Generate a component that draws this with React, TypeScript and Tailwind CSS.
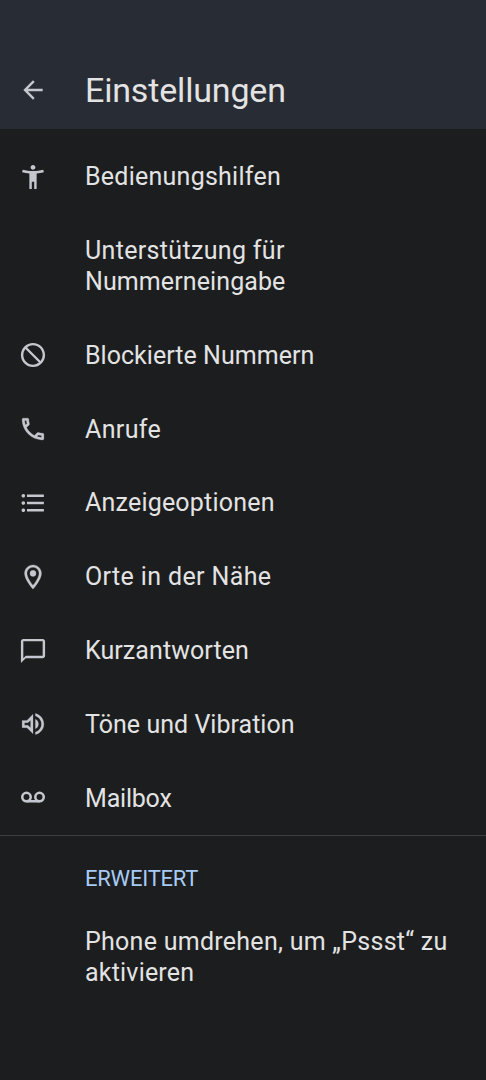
import type { ReactNode } from 'react';
import { MdAccessibilityNew, MdArrowBack, MdBlock, MdFormatListBulleted, MdChatBubbleOutline } from 'react-icons/md';

const ICON = 'size-[30px] p-[0.5px] text-[#c4c7ce]';

function CallIcon() {
  return (
    <svg viewBox="0 0 24 24" className={ICON} fill="currentColor" stroke="currentColor" strokeWidth="0.25">
      <path d="M6.54 5c.06.89.21 1.76.45 2.59l-1.2 1.2c-.41-1.2-.67-2.47-.76-3.79h1.51m9.86 12.02c.85.24 1.72.39 2.6.45v1.49c-1.32-.09-2.59-.35-3.8-.75l1.2-1.19M7.5 3H4c-.55 0-1 .45-1 1 0 9.39 7.61 17 17 17 .55 0 1-.45 1-1v-3.49c0-.55-.45-1-1-1-1.24 0-2.45-.2-3.57-.57-.1-.04-.21-.05-.31-.05-.26 0-.51.1-.71.29l-2.2 2.2c-2.83-1.45-5.15-3.76-6.59-6.59l2.2-2.2c.28-.28.36-.67.25-1.02C8.7 6.45 8.5 5.25 8.5 4c0-.55-.45-1-1-1z" />
    </svg>
  );
}

function PlaceIcon() {
  return (
    <svg viewBox="0 0 24 24" className={ICON} fill="currentColor" stroke="currentColor" strokeWidth="0.25">
      <path fillRule="evenodd" d="M12 2C8.13 2 5 5.13 5 9c0 5.25 7 13 7 13s7-7.75 7-13c0-3.87-3.13-7-7-7zM7 9c0-2.76 2.24-5 5-5s5 2.24 5 5c0 2.88-2.88 7.19-5 9.88C9.92 16.21 7 11.85 7 9z" />
      <circle cx="12" cy="9" r="2.5" />
    </svg>
  );
}

function VolumeIcon() {
  return (
    <svg viewBox="0 0 24 24" className={ICON} fill="currentColor" stroke="currentColor" strokeWidth="0.2">
      <path d="M3 9v6h4l5 5V4L7 9H3zm7-.17v6.34L7.83 13H5v-2h2.83L10 8.83zM16.5 12A4.5 4.5 0 0 0 14 7.97v8.05A4.47 4.47 0 0 0 16.5 12zM14 3.23v2.06c2.89.86 5 3.54 5 6.71s-2.11 5.85-5 6.71v2.06c4.01-.91 7-4.49 7-8.77s-2.99-7.86-7-8.77z" />
    </svg>
  );
}

function VoicemailIcon() {
  return (
    <svg viewBox="0 0 24 24" className={ICON} fill="none" stroke="currentColor" strokeWidth="2.1">
      <circle cx="6.6" cy="11.2" r="3.5" />
      <circle cx="17.4" cy="11.2" r="3.5" />
      <path d="M6.6 14.7h10.8" />
    </svg>
  );
}

type RowData = { label: string; tracking: string; icon: ReactNode };

const rows: RowData[] = [
  { label: 'Blockierte Nummern', tracking: 'tracking-[0.03px]', icon: <MdBlock className="size-[30px] -scale-x-100 p-[0.5px] text-[#c4c7ce]" /> },
  { label: 'Anrufe', tracking: 'tracking-[0.35px]', icon: <CallIcon /> },
  { label: 'Anzeigeoptionen', tracking: 'tracking-[0.2px]', icon: <MdFormatListBulleted className={ICON} /> },
  { label: 'Orte in der Nähe', tracking: 'tracking-[0.37px]', icon: <PlaceIcon /> },
  { label: 'Kurzantworten', tracking: 'tracking-[0.07px]', icon: <MdChatBubbleOutline className={ICON} /> },
  { label: 'Töne und Vibration', tracking: 'tracking-[0.03px]', icon: <VolumeIcon /> },
  { label: 'Mailbox', tracking: 'tracking-[-0.2px]', icon: <VoicemailIcon /> },
];

function Row({ label, tracking, icon }: RowData) {
  return (
    <li className="flex h-[73.8px] items-center">
      <span className="flex w-[85px] shrink-0 pl-[18px]">{icon}</span>
      <span className={tracking}>{label}</span>
    </li>
  );
}

export default function App() {
  return (
    <main className="flex h-[1080px] w-[486px] flex-col bg-[#1c1d1f] font-['Roboto',sans-serif] text-[25px] leading-[31px] text-[#e3e3e3]">
      <header className="flex h-[129px] shrink-0 items-end bg-[#282c34] pb-[14.6px]">
        <span className="flex h-12 w-[85px] shrink-0 items-center pl-[18px]"><MdArrowBack className={ICON} /></span>
        <h1 className="text-[34px] leading-[48px] tracking-[-0.17px]">Einstellungen</h1>
      </header>
      <ul className="pt-[10.7px]">
        <Row label="Bedienungshilfen" tracking="tracking-[0.25px]" icon={<MdAccessibilityNew className={ICON} />} />
        <li className="flex h-[105px] flex-col justify-center pl-[85px]">
          <span className="tracking-[0.33px]">Unterstützung für</span>
          <span className="tracking-[0.1px]">Nummerneingabe</span>
        </li>
        {rows.map((r) => <Row key={r.label} {...r} />)}
      </ul>
      <section className="border-t border-[#3c3e40] pl-[85px] pt-[26.8px]">
        <h2 className="text-[22px] leading-[31px] tracking-[-0.22px] text-[#a8cbf5]">ERWEITERT</h2>
        <p className="flex flex-col pt-8">
          <span className="tracking-[0.27px]">Phone umdrehen, um „Pssst“ zu</span>
          <span className="tracking-[0.2px]">aktivieren</span>
        </p>
      </section>
    </main>
  );
}
